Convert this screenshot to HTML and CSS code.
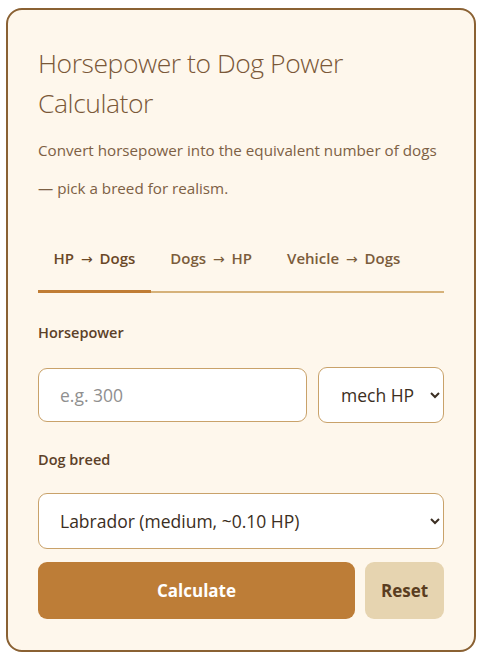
FILE: index.html
```html
<!DOCTYPE html>
<html lang="en">
<head>
<meta charset="utf-8">
<title>Horsepower to Dog Power Calculator</title>
<link rel="stylesheet" href="styles.css">
</head>
<body>
<main class="card">
  <h1 class="title">Horsepower to Dog Power Calculator</h1>
  <p class="subtitle">Convert horsepower into the equivalent number of dogs — pick a breed for realism.</p>
  <nav class="tabs">
    <button class="tab active">HP <span class="arrow">→</span> Dogs</button>
    <button class="tab">Dogs <span class="arrow">→</span> HP</button>
    <button class="tab">Vehicle <span class="arrow">→</span> Dogs</button>
  </nav>
  <label class="label" for="hp">Horsepower</label>
  <div class="row">
    <input id="hp" class="field input" type="text" placeholder="e.g. 300">
    <select class="field unit"><option>mech HP</option></select>
  </div>
  <label class="label label-breed" for="breed">Dog breed</label>
  <select id="breed" class="field breed"><option>Labrador (medium, ~0.10 HP)</option></select>
  <div class="actions">
    <button class="btn primary">Calculate</button>
    <button class="btn secondary">Reset</button>
  </div>
</main>
</body>
</html>
```
FILE: styles.css
```css
* { box-sizing: border-box; }
html, body { margin: 0; background: #ffffff; }
body {
  padding: 8px 6px;
  font-family: "Open Sans", "Noto Sans", sans-serif;
  color: #6b4c2e;
}
.card {
  width: 470px;
  height: 644px;
  border: 2px solid #8a6133;
  border-radius: 16px;
  background: #fef7ec;
  padding: 33px 30px 30px;
}
.title {
  margin: 0;
  font-weight: 300;
  font-size: 26.5px;
  line-height: 40px;
  color: #7a5838;
  letter-spacing: -0.45px;
}
.subtitle {
  margin: 8px 0 0;
  font-size: 15.2px;
  line-height: 38px;
  color: #7d6044;
}
.tabs {
  display: flex;
  gap: 4px;
  margin-top: 31px;
  border-bottom: 2px solid #d6b27a;
}
.tab {
  border: 0;
  background: none;
  font-family: inherit;
  font-size: 15px;
  font-weight: 600;
  color: #7b5c3b;
  padding: 10px 15.5px 22px;
  margin-bottom: -2px;
  border-bottom: 3px solid transparent;
}
.arrow {
  display: inline-block;
  margin: 0 3px;
  font-family: "DejaVu Sans", sans-serif;
  font-weight: 400;
  font-size: 14px;
}
.tab.active { border-bottom-color: #c07d35; color: #6a4726; }
.label {
  display: block;
  margin-top: 30px;
  font-size: 14.5px;
  font-weight: 600;
  color: #5c4128;
}
.row {
  display: flex;
  gap: 11px;
  margin-top: 25px;
}
.field {
  border: 1px solid #c9a26a;
  border-radius: 9px;
  background: #ffffff;
  font-family: inherit;
  font-size: 17.5px;
  color: #3b2e22;
}
.input {
  flex: 1;
  height: 54px;
  padding: 0 21px;
  margin-top: 1px;
}
.input::placeholder { color: #8f8f8f; }
.unit {
  width: 126px;
  height: 56px;
  padding: 0 6px 0 18px;
}
.label-breed { margin-top: 27px; }
.breed {
  display: block;
  width: 100%;
  height: 56px;
  margin-top: 24px;
  padding: 0 6px 0 17px;
}
.actions {
  display: flex;
  gap: 10px;
  margin-top: 13px;
}
.btn {
  height: 57px;
  border: 0;
  border-radius: 9px;
  font-family: inherit;
  font-size: 17px;
  font-weight: 700;
}
.primary { flex: 1; background: #bd7d37; color: #ffffff; }
.secondary { width: 79px; background: #e6d4b0; color: #5a3d20; }
```
